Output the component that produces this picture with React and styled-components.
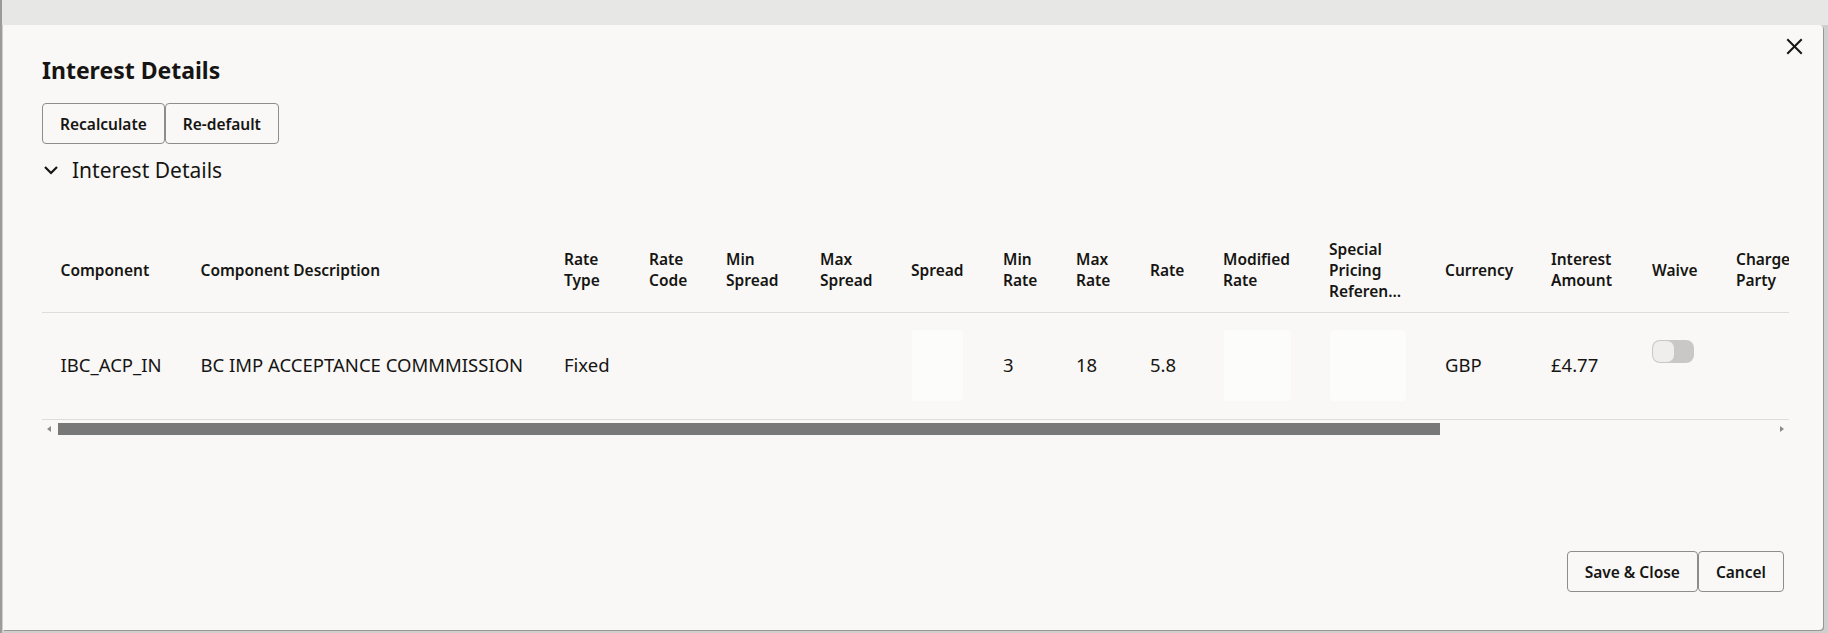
import React from "react";
import styled, { createGlobalStyle } from "styled-components";

const GlobalStyle = createGlobalStyle`
  html, body {
    margin: 0;
    padding: 0;
  }

  body {
    font-family: "Noto Sans", "Open Sans", Arial, sans-serif;
    color: #161513;
    background: #d2d2d2;
    overflow: hidden;
  }
`;

const Backdrop = styled.div`
  width: 1828px;
  height: 633px;
  box-sizing: border-box;
  display: flex;
  padding: 25px 5px 3px 1px;
  background: linear-gradient(#e7e7e6 25px, #cfcfcf 25px);
  border-left: 2px solid #9b9b9b;
`;

const Dialog = styled.section`
  position: relative;
  flex: 1;
  min-width: 0;
  display: flex;
  flex-direction: column;
  box-sizing: border-box;
  padding: 0 34px 38px 39px;
  background: #f9f8f6;
  border-radius: 0 4px 4px 0;
  box-shadow: 1px 1px 0 #979797;
`;

const CloseButton = styled.button`
  position: absolute;
  top: 13px;
  right: 20px;
  width: 17px;
  height: 17px;
  padding: 0;
  border: none;
  background: none;
  cursor: pointer;

  & svg {
    display: block;
  }
`;

const Title = styled.h1`
  margin: 30px 0 0;
  font-size: 23px;
  line-height: 30px;
  font-weight: 700;
`;

const ButtonGroup = styled.div`
  display: flex;
  justify-content: ${(p) => (p.$end ? "flex-end" : "flex-start")};
  margin: ${(p) => p.$margin || "0"};
`;

const Button = styled.button`
  height: 41px;
  padding: 0 17px;
  font-family: inherit;
  font-size: 15.5px;
  font-weight: 600;
  color: #161513;
  background: #f9f8f6;
  border: 1px solid #8f8d8a;
  border-radius: 4px;
  cursor: pointer;
`;

const SectionHeader = styled.div`
  display: flex;
  align-items: center;
  gap: 13px;
  margin-top: 12px;
  padding-left: 1px;
  font-size: 21px;
  line-height: 28px;

  & svg {
    display: block;
  }
`;

const TableViewport = styled.div`
  margin-top: 45px;
  overflow: hidden;
`;

const Table = styled.table`
  table-layout: fixed;
  width: 1765px;
  border-collapse: collapse;
`;

const HeadCell = styled.th`
  width: ${(p) => p.$w}px;
  box-sizing: border-box;
  height: 83px;
  padding: 0 12px 0 18.5px;
  text-align: left;
  vertical-align: middle;
  font-size: 15.5px;
  line-height: 21px;
  font-weight: 600;
  border-bottom: 1px solid #dfddda;
  white-space: normal;
`;

const Cell = styled.td`
  height: 107px;
  padding: 0 12px 2px 18.5px;
  box-sizing: border-box;
  vertical-align: middle;
  font-size: 18.5px;
  white-space: nowrap;
  border-bottom: 1px solid #dfddda;
`;

const ReadonlyField = styled.div`
  width: ${(p) => p.$width}px;
  height: 71px;
  margin: 2px 0 0 1px;
  background: #fcfcfb;
  border-radius: 4px;
`;

const Toggle = styled.span`
  display: block;
  width: 42px;
  height: 23px;
  margin-bottom: 27px;
  box-sizing: border-box;
  padding: 1px;
  background: #c9c8c6;
  border-radius: 8px;

  &::before {
    content: "";
    display: block;
    width: 21px;
    height: 21px;
    background: #efeeec;
    border-radius: 7px;
  }
`;

const ScrollBar = styled.div`
  display: flex;
  align-items: center;
  height: 12px;
  margin-top: 3px;
`;

const ScrollArrow = styled.span`
  flex: 0 0 14px;
  display: flex;
  justify-content: center;

  &::before {
    content: "";
    border-top: 3.5px solid transparent;
    border-bottom: 3.5px solid transparent;
    ${(p) =>
      p.$dir === "left"
        ? "border-right: 4px solid #8a8a8a;"
        : "border-left: 4px solid #8a8a8a;"}
  }
`;

const ScrollTrack = styled.div`
  flex: 1;
  height: 100%;
  display: flex;
`;

const ScrollThumb = styled.div`
  width: 80.4%;
  margin-left: 2px;
  background: #787878;
`;

const Footer = styled.div`
  margin-top: auto;
`;

const columns = [
  { label: "Component", width: 140 },
  { label: "Component Description", width: 363.5 },
  { label: "Rate Type", width: 85 },
  { label: "Rate Code", width: 77 },
  { label: "Min Spread", width: 94 },
  { label: "Max Spread", width: 91 },
  { label: "Spread", width: 92 },
  { label: "Min Rate", width: 73 },
  { label: "Max Rate", width: 74 },
  { label: "Rate", width: 73 },
  { label: "Modified Rate", width: 106 },
  { label: "Special Pricing Referen…", width: 116 },
  { label: "Currency", width: 106 },
  { label: "Interest Amount", width: 101 },
  { label: "Waive", width: 84 },
  { label: "Charge Party", width: 90 },
];

const CloseIcon = () => (
  <svg width="17" height="17" viewBox="0 0 17 17">
    <path
      d="M2 2 L15 15 M15 2 L2 15"
      stroke="#161513"
      strokeWidth="2"
      strokeLinecap="square"
    />
  </svg>
);

const ChevronDown = () => (
  <svg width="16" height="10" viewBox="0 0 16 10">
    <path
      d="M2 2 L8 8 L14 2"
      fill="none"
      stroke="#161513"
      strokeWidth="2.2"
    />
  </svg>
);

const App = () => {
  return (
    <>
      <GlobalStyle />
      <Backdrop>
        <Dialog>
          <CloseButton aria-label="Close">
            <CloseIcon />
          </CloseButton>
          <Title>Interest Details</Title>
          <ButtonGroup $margin="18px 0 0">
            <Button>Recalculate</Button>
            <Button>Re-default</Button>
          </ButtonGroup>
          <SectionHeader>
            <ChevronDown />
            Interest Details
          </SectionHeader>
          <TableViewport>
            <Table>
              <thead>
                <tr>
                  {columns.map((c) => (
                    <HeadCell key={c.label} $w={c.width}>
                      {c.label}
                    </HeadCell>
                  ))}
                </tr>
              </thead>
              <tbody>
                <tr>
                  <Cell>IBC_ACP_IN</Cell>
                  <Cell>BC IMP ACCEPTANCE COMMMISSION</Cell>
                  <Cell>Fixed</Cell>
                  <Cell />
                  <Cell />
                  <Cell />
                  <Cell>
                    <ReadonlyField $width={51} />
                  </Cell>
                  <Cell>3</Cell>
                  <Cell>18</Cell>
                  <Cell>5.8</Cell>
                  <Cell>
                    <ReadonlyField $width={67} />
                  </Cell>
                  <Cell>
                    <ReadonlyField $width={76} />
                  </Cell>
                  <Cell>GBP</Cell>
                  <Cell>£4.77</Cell>
                  <Cell>
                    <Toggle />
                  </Cell>
                  <Cell />
                </tr>
              </tbody>
            </Table>
          </TableViewport>
          <ScrollBar>
            <ScrollArrow $dir="left" />
            <ScrollTrack>
              <ScrollThumb />
            </ScrollTrack>
            <ScrollArrow $dir="right" />
          </ScrollBar>
          <Footer>
            <ButtonGroup $end $margin="0 5px 0 0">
              <Button>Save &amp; Close</Button>
              <Button>Cancel</Button>
            </ButtonGroup>
          </Footer>
        </Dialog>
      </Backdrop>
    </>
  );
};

export default App;
